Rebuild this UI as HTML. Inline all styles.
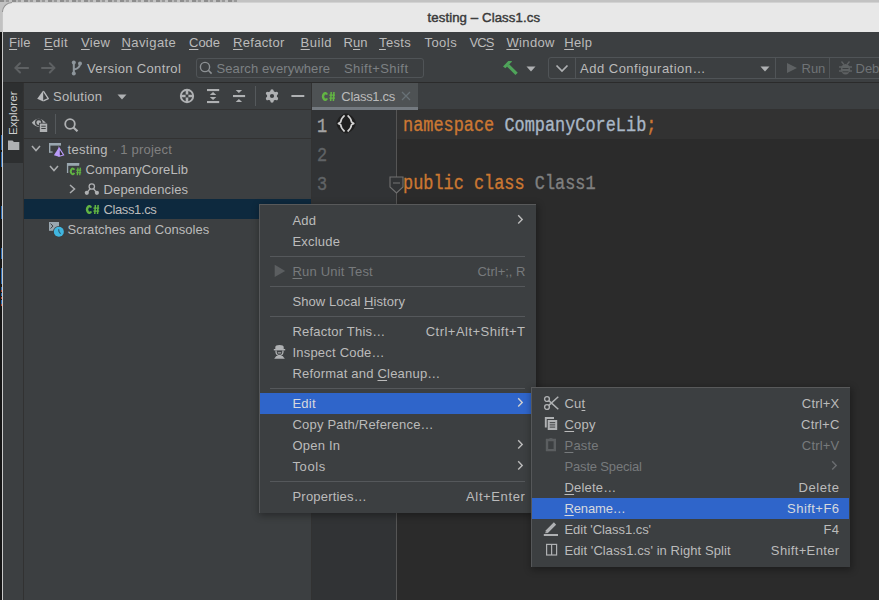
<!DOCTYPE html>
<html><head><meta charset="utf-8">
<style>
*{margin:0;padding:0;box-sizing:border-box}
html,body{width:879px;height:600px;overflow:hidden;background:#2b2b2b}
body{position:relative;font-family:"Liberation Sans",sans-serif;font-size:13px;color:#bbbbbb}
.a{position:absolute}
.t{position:absolute;white-space:pre;line-height:1}
.code{font-family:'Liberation Mono',monospace;font-size:16.9px;transform:scaleY(1.17);transform-origin:0 0;-webkit-text-stroke:0.3px currentColor}
u{text-decoration:underline;text-decoration-thickness:1px;text-underline-offset:2px}
</style></head><body>
<!-- desktop strip -->
<div class="a" style="left:0;top:0;width:879px;height:32px;background:#c2c2c2"></div>
<div class="a" style="left:0;top:0;width:240px;height:1.5px;background:repeating-linear-gradient(90deg,#8d8d8d 0 4px,#b8b8b8 4px 6px,#999 6px 9px,#c2c2c2 9px 12px)"></div>
<div class="a" style="left:0;top:32px;width:2px;height:568px;background:#151515"></div>
<div class="a" style="left:1px;top:135px;width:1px;height:15px;background:#2a6cb5"></div><div class="a" style="left:1px;top:152px;width:1px;height:15px;background:#2a6cb5"></div><div class="a" style="left:1px;top:206px;width:1px;height:13px;background:#2a6cb5"></div><div class="a" style="left:1px;top:248px;width:1px;height:11px;background:#2a6cb5"></div><div class="a" style="left:1px;top:268px;width:1px;height:16px;background:#2a6cb5"></div><div class="a" style="left:1px;top:287px;width:1px;height:3px;background:#2a6cb5"></div><div class="a" style="left:1px;top:290px;width:1px;height:2px;background:#b04a3a"></div><div class="a" style="left:1px;top:293px;width:1px;height:3px;background:#2a6cb5"></div><div class="a" style="left:1px;top:297px;width:1px;height:2px;background:#b04a3a"></div><div class="a" style="left:1px;top:300px;width:1px;height:4px;background:#2a6cb5"></div><div class="a" style="left:1px;top:304px;width:1px;height:2px;background:#b04a3a"></div>
<div class="a" style="left:2px;top:10px;width:1px;height:590px;background:#c8c8c8"></div>
<!-- title bar -->
<div class="a" style="left:3px;top:2px;width:880px;height:30px;background:#e8e8e8;border-top-left-radius:9px;border-top:1px solid #d2d2d2"></div>
<div class="a" style="left:2px;top:2px;width:10px;height:10px;border-top-left-radius:10px;border-left:1px solid #6a6a6a;border-top:1px solid #6a6a6a;opacity:0.6"></div>
<div class="t" style="left:427.5px;top:10.5px;font-size:13.2px;color:#3a3a3a;-webkit-text-stroke:0.45px #3a3a3a;letter-spacing:0.1px">testing – Class1.cs</div>

<!-- menubar + toolbar bg -->
<div class="a" style="left:3px;top:32px;width:876px;height:50px;background:#3c3f41"></div>
<div class="a" style="left:3px;top:82px;width:876px;height:1px;background:#2b2b2b"></div>

<!-- main lower area -->
<div class="a" style="left:3px;top:83px;width:20px;height:517px;background:#3c3f41"></div>
<div class="a" style="left:3px;top:83px;width:20px;height:80px;background:#2d2f30"></div>
<div class="a" style="left:23px;top:83px;width:1px;height:517px;background:#323232"></div>
<div class="a" style="left:24px;top:83px;width:287px;height:517px;background:#3c3f41"></div>
<div class="a" style="left:24px;top:109px;width:287px;height:1px;background:#323232"></div>
<div class="a" style="left:24px;top:138px;width:287px;height:1px;background:#323232"></div>
<div class="a" style="left:24px;top:199px;width:287px;height:20px;background:#0d293e"></div>
<div class="a" style="left:311px;top:83px;width:1px;height:517px;background:#323232"></div>

<!-- editor -->
<div class="a" style="left:312px;top:83px;width:567px;height:26px;background:#3c3f41"></div>
<div class="a" style="left:312px;top:109px;width:567px;height:1px;background:#323232"></div>
<div class="a" style="left:312px;top:83px;width:106px;height:27px;background:#4e5254"></div>
<div class="a" style="left:312px;top:107px;width:106px;height:3px;background:#747a80"></div>
<div class="a" style="left:312px;top:110px;width:85px;height:490px;background:#313335"></div>
<div class="a" style="left:396px;top:110px;width:1px;height:490px;background:#555555"></div>
<div class="a" style="left:397px;top:110px;width:482px;height:29px;background:#323232"></div>

<!-- menubar -->
<div class="t" style="left:9px;top:35.5px;letter-spacing:0.17px"><u>F</u>ile</div>
<div class="t" style="left:43.9px;top:35.5px;letter-spacing:0.47px"><u>E</u>dit</div>
<div class="t" style="left:81px;top:35.5px;letter-spacing:0.27px"><u>V</u>iew</div>
<div class="t" style="left:121.4px;top:35.5px;letter-spacing:0.45px"><u>N</u>avigate</div>
<div class="t" style="left:189px;top:35.5px;letter-spacing:0px"><u>C</u>ode</div>
<div class="t" style="left:233px;top:35.5px;letter-spacing:0.32px"><u>R</u>efactor</div>
<div class="t" style="left:300.6px;top:35.5px;letter-spacing:0.52px"><u>B</u>uild</div>
<div class="t" style="left:343.6px;top:35.5px;letter-spacing:0px">R<u>u</u>n</div>
<div class="t" style="left:379px;top:35.5px;letter-spacing:0.36px"><u>T</u>ests</div>
<div class="t" style="left:424.5px;top:35.5px;letter-spacing:0.44px">Too<u>l</u>s</div>
<div class="t" style="left:469.6px;top:35.5px;letter-spacing:-1.0px">VC<u>S</u></div>
<div class="t" style="left:506.4px;top:35.5px;letter-spacing:0.37px"><u>W</u>indow</div>
<div class="t" style="left:564.2px;top:35.5px;letter-spacing:0.35px"><u>H</u>elp</div>
<!-- toolbar -->
<svg class="a" style="left:0;top:0" width="879" height="600" viewBox="0 0 879 600"><path d="M15.3 67.9H28.1M15.3 67.9L20 63.3M15.3 67.9L20 72.5M54.5 67.9H42M54.5 67.9L49.8 63.3M54.5 67.9L49.8 72.5" stroke="#5e6163" stroke-width="2" fill="none" stroke-linecap="round"/></svg>
<svg class="a" style="left:0;top:0" width="879" height="600" viewBox="0 0 879 600"><g fill="#8e969c"><circle cx="73.8" cy="62.4" r="2"/><circle cx="80" cy="63.4" r="2"/><circle cx="73.8" cy="73.4" r="2"/><path d="M73.8 62.4V73.4M80 63.4Q80.2 68.2 73.8 69.6" fill="none" stroke="#8e969c" stroke-width="2"/></g></svg>
<div class="t" style="left:87px;top:62px;letter-spacing:0.35px">Version Control</div>
<div class="a" style="left:196px;top:58px;width:228px;height:20px;border:1px solid #505457;border-radius:3px"></div>
<svg class="a" style="left:199px;top:61px" width="14" height="14" viewBox="0 0 14 14"><circle cx="6" cy="6" r="4.6" stroke="#8d9194" stroke-width="1.4" fill="none"/><path d="M9.3 9.3L12.6 12.6" stroke="#8d9194" stroke-width="1.6"/></svg>
<div class="t" style="left:216.5px;top:62px;color:#7d8184;letter-spacing:0.1px">Search everywhere</div>
<div class="t" style="left:344px;top:62px;color:#7d8184;letter-spacing:0.44px">Shift+Shift</div>
<svg class="a" style="left:498px;top:56px" width="24" height="24" viewBox="0 0 24 24"><path d="M5 10.6L10.3 5H14L13.6 6L7.4 12.2Z" fill="#4fa45a"/><path d="M10 9.3L18.6 17.8" stroke="#4fa45a" stroke-width="3.3"/></svg>
<svg class="a" style="left:526px;top:66px" width="10" height="6" viewBox="0 0 10 6"><path d="M0.5 0.5H9.5L5 5.5Z" fill="#afb1b3"/></svg>
<div class="a" style="left:548px;top:57px;width:340px;height:22px;border:1px solid #505457;border-radius:3px"></div>
<div class="a" style="left:575px;top:58px;width:1px;height:20px;background:#505457"></div>
<svg class="a" style="left:555px;top:63px" width="14" height="10" viewBox="0 0 14 10"><path d="M1.5 2.5L7 8L12.5 2.5" stroke="#afb1b3" stroke-width="1.7" fill="none"/></svg>
<div class="t" style="left:580px;top:62px;letter-spacing:0.5px">Add Configuration…</div>
<svg class="a" style="left:760px;top:66px" width="10" height="6" viewBox="0 0 10 6"><path d="M0.5 0.5H9.5L5 5.5Z" fill="#afb1b3"/></svg>
<div class="a" style="left:775px;top:58px;width:1px;height:20px;background:#505457"></div>
<svg class="a" style="left:786px;top:62px" width="12" height="12" viewBox="0 0 12 12"><path d="M1 1L11 6L1 11Z" fill="#5e6163"/></svg>
<div class="t" style="left:801.5px;top:62px;color:#6f7376">Run</div>
<div class="a" style="left:829px;top:58px;width:1px;height:20px;background:#505457"></div>
<svg class="a" style="left:0;top:0" width="879" height="600" viewBox="0 0 879 600"><g fill="#5e6163" stroke="#5e6163"><path d="M841.5 61.5L844 64.5M849.5 61.5L847 64.5" stroke-width="1.3" fill="none"/><ellipse cx="845.5" cy="69.3" rx="4.6" ry="5.2" stroke="none"/><path d="M839 67H852M839 71H852" stroke-width="1.3"/><path d="M842.5 68.5H848.5M842.5 71.8H848.5" stroke="#3c3f41" stroke-width="1"/></g></svg>
<div class="t" style="left:855.5px;top:62px;color:#6f7376">Debug</div>
<!-- tool window header -->
<div class="t" style="left:8px;top:134.5px;font-size:11.5px;transform:rotate(-90deg);transform-origin:0 0;letter-spacing:0.1px;color:#cfcfcf">Explorer</div>
<svg class="a" style="left:7px;top:140px" width="13" height="11" viewBox="0 0 13 11"><path d="M1 0.5H5.5L7 2H12.3V10H1Z" fill="#afb1b3"/></svg>
<svg class="a" style="left:0;top:0" width="879" height="600" viewBox="0 0 879 600"><path d="M43.2 90.5L37.2 98.7L43.2 101.6Z" fill="#b8babc"/><path d="M43.4 91.2L48.3 98.6L43.4 100.9" stroke="#b8babc" stroke-width="1.3" fill="none" stroke-linejoin="round"/></svg>
<div class="t" style="left:53px;top:90px;letter-spacing:0.3px">Solution</div>
<svg class="a" style="left:117px;top:94px" width="10" height="6" viewBox="0 0 10 6"><path d="M0.5 0.5H9.5L5 5.5Z" fill="#afb1b3"/></svg>
<svg class="a" style="left:0;top:0" width="879" height="600" viewBox="0 0 879 600"><g fill="#afb1b3" stroke="none">
<circle cx="187" cy="96" r="6.2" stroke="#afb1b3" stroke-width="1.9" fill="none"/>
<path d="M187 89.5V94.6M187 97.4V102.5M180.5 96H185.6M188.4 96H193.5" stroke="#afb1b3" stroke-width="2.6"/>
<rect x="207" y="89" width="12.2" height="2.1"/><rect x="207" y="101" width="12.2" height="2.1"/>
<path d="M209.8 95H216.3L213.05 91.9Z M209.8 97H216.3L213.05 100.1Z"/>
<path d="M235.7 90H242.1L238.9 93.1Z M235.7 102H242.1L238.9 98.9Z"/><rect x="233" y="95" width="12.1" height="2.1"/>
<rect x="255" y="86" width="1" height="20" fill="#55595c"/>
<circle cx="272" cy="96" r="5"/>
<path d="M272.00 90.90L272.00 101.10M267.58 93.45L276.42 98.55M276.42 93.45L267.58 98.55" stroke="#afb1b3" stroke-width="3.4" stroke-linecap="round"/>
<circle cx="272" cy="96" r="2.1" fill="#3c3f41"/>
<rect x="291.4" y="95" width="12.9" height="2"/>
</g></svg>
<!-- tree toolbar -->
<svg class="a" style="left:0;top:0" width="879" height="600" viewBox="0 0 879 600"><path d="M31.8 122.8Q38.5 114.5 45.8 122.8Q38.5 131 31.8 122.8Z" fill="#afb1b3"/><circle cx="38.8" cy="122.6" r="3.1" stroke="#3c3f41" stroke-width="1.4" fill="#afb1b3"/><rect x="39" y="122.8" width="9" height="10" fill="#3c3f41"/><rect x="39.8" y="123.6" width="7.4" height="8.4" fill="#afb1b3"/><path d="M41.3 126.2H45.7M41.3 128.5H45.7" stroke="#3c3f41" stroke-width="1"/></svg>
<div class="a" style="left:55px;top:114px;width:1px;height:20px;background:#55595c"></div>
<svg class="a" style="left:64px;top:118px" width="16" height="14" viewBox="0 0 16 14"><circle cx="6" cy="6" r="4.8" stroke="#afb1b3" stroke-width="1.8" fill="none"/><path d="M9.5 9.5L13.5 13.3" stroke="#afb1b3" stroke-width="2.2"/></svg>
<!-- tree -->
<svg class="a" style="left:31px;top:145px" width="10" height="7" viewBox="0 0 10 7"><path d="M1 1L5 5.5L9 1" stroke="#aaacae" stroke-width="1.55" fill="none"/></svg>
<div class="t" style="left:67.5px;top:143px;letter-spacing:0.3px">testing</div>
<div class="t" style="left:112px;top:143px;color:#808080;letter-spacing:0.2px">· 1 project</div>
<svg class="a" style="left:49px;top:165px" width="10" height="7" viewBox="0 0 10 7"><path d="M1 1L5 5.5L9 1" stroke="#aaacae" stroke-width="1.55" fill="none"/></svg>
<div class="t" style="left:85.5px;top:163px;letter-spacing:0.1px">CompanyCoreLib</div>
<svg class="a" style="left:68.6px;top:184px" width="7" height="10" viewBox="0 0 7 10"><path d="M1 1L5.5 5L1 9" stroke="#aaacae" stroke-width="1.55" fill="none"/></svg>
<div class="t" style="left:103.5px;top:183px;letter-spacing:0.13px">Dependencies</div>
<div class="t" style="left:103.5px;top:203px;letter-spacing:-0.38px">Class1.cs</div>
<div class="t" style="left:67.5px;top:223px;letter-spacing:0.04px">Scratches and Consoles</div>
<svg class="a" style="left:0;top:0" width="879" height="600" viewBox="0 0 879 600">
<path d="M49.7 152.5V143.8H61" stroke="#9aa7b0" stroke-width="1.4" fill="none"/><rect x="49" y="143" width="12" height="2.6" fill="#9aa7b0"/><rect x="49" y="151.4" width="3.6" height="1.3" fill="#9aa7b0"/>
<path d="M59 147.2L53.9 155.2L59 156.7Z" fill="#b99bf8"/><path d="M59.2 148L63.6 155L59.2 156.3Z" stroke="#b99bf8" stroke-width="1.2" fill="#2e2f30"/>
<path d="M67.6 173V163.8H79.2" stroke="#9aa7b0" stroke-width="1.4" fill="none"/><rect x="67" y="163" width="12.2" height="2.8" fill="#9aa7b0"/>
<rect x="68.8" y="166.6" width="13.5" height="9.5" fill="#3c3f41"/>
<path d="M74.25 169.83A1.84 2.81 0 1 0 74.25 172.97" stroke="#62b543" stroke-width="1.98" fill="none"/><path d="M77.98 167.60L77.38 175.20M80.36 167.60L79.76 175.20" stroke="#62b543" stroke-width="1.29"/><path d="M76.23 170.18H81.20M76.23 172.77H81.20" stroke="#62b543" stroke-width="1.14"/>
<circle cx="91.8" cy="186.5" r="2.7" stroke="#afb1b3" stroke-width="1.3" fill="none"/><path d="M90.2 188.6L87 192.5M93.4 188.6L96.6 192.5" stroke="#afb1b3" stroke-width="1.3"/><circle cx="86.8" cy="192.8" r="2.1" fill="#afb1b3"/><circle cx="96.9" cy="192.8" r="2.1" fill="#afb1b3"/>
<path d="M91.07 207.64A2.13 3.33 0 1 0 91.07 211.36" stroke="#62b543" stroke-width="2.34" fill="none"/><path d="M95.38 205.00L94.78 214.00M98.15 205.00L97.55 214.00" stroke="#62b543" stroke-width="1.53"/><path d="M93.39 208.06H99.20M93.39 211.12H99.20" stroke="#62b543" stroke-width="1.35"/>
<rect x="49" y="222" width="10" height="8.8" fill="#9aa7b0"/><path d="M50.6 223.6L52.9 226.1L50.6 228.6" stroke="#3c3f41" stroke-width="1" fill="none"/>
<circle cx="58.85" cy="231.75" r="5.8" fill="#3c3f41"/><circle cx="58.85" cy="231.75" r="5" fill="#40b6e0"/><path d="M58.6 229.2Q58.6 232.5 60.6 233.8" stroke="#2b5a70" stroke-width="1.2" fill="none"/>
<path d="M326.97 94.64A2.08 3.33 0 1 0 326.97 98.36" stroke="#62b543" stroke-width="2.34" fill="none"/><path d="M331.24 92.00L330.64 101.00M333.97 92.00L333.37 101.00" stroke="#62b543" stroke-width="1.53"/><path d="M329.28 95.06H335.00M329.28 98.12H335.00" stroke="#62b543" stroke-width="1.35"/>
</svg>
<!-- editor tab -->
<div class="t" style="left:341.3px;top:90px;letter-spacing:-0.29px">Class1.cs</div>
<svg class="a" style="left:401px;top:91px" width="10" height="10" viewBox="0 0 10 10"><path d="M1 1L9 9M9 1L1 9" stroke="#687176" stroke-width="1.3"/></svg>
<!-- gutter -->
<div class="t code" style="left:317px;top:117.5px;color:#a4a3a3">1</div>
<div class="t code" style="left:317px;top:146.5px;color:#606366">2</div>
<div class="t code" style="left:317px;top:175.5px;color:#606366">3</div>
<svg class="a" style="left:0;top:0" width="879" height="600" viewBox="0 0 879 600"><path d="M344.8 114.2Q337.5 118 337.2 123.4Q337.5 128.8 344.8 132.6H347.4Q354.7 128.8 355 123.4Q354.7 118 347.4 114.2Z" fill="#1f1f1f" stroke="#1f1f1f" stroke-width="1.5"/><path d="M344.6 115.3Q341 118.3 340.7 122L338.4 123.4L340.7 124.8Q341 128.5 344.6 131.5M347.6 115.3Q351.2 118.3 351.5 122L353.8 123.4L351.5 124.8Q351.2 128.5 347.6 131.5" stroke="#d2d2d2" stroke-width="1.7" fill="none" stroke-linejoin="round"/></svg>
<svg class="a" style="left:389px;top:176px" width="15" height="18" viewBox="0 0 15 18"><path d="M1 1H14V11L7.5 17L1 11Z" fill="#313335" stroke="#707070" stroke-width="1.1"/><path d="M4 7H11" stroke="#707070" stroke-width="1.1"/></svg>
<!-- code -->
<div class="t code" style="left:403px;top:117px;color:#cc7832">namespace <span style="color:#a9b7c6">CompanyCoreLib</span>;</div>
<div class="t code" style="left:403px;top:175px;color:#cc7832">public class <span style="color:#808080">Class1</span></div>
<!-- context menu -->
<div class="a" style="left:259px;top:204px;width:277px;height:309px;background:#3c3f41;border-top:1px solid #58595a;border-left:1px solid #555759;box-shadow:1px 2px 7px 1px rgba(0,0,0,0.32)"></div>
<div class="t" style="left:292.5px;top:214px;color:#bbbbbb;letter-spacing:0.2px">Add</div>
<svg class="a" style="left:517px;top:214px" width="7" height="11" viewBox="0 0 7 11"><path d="M1.2 1.3L5.2 5.4L1.2 9.5" stroke="#bbbbbb" stroke-width="1.4" fill="none"/></svg>
<div class="t" style="left:292.5px;top:235px;color:#bbbbbb;letter-spacing:0.2px">Exclude</div>
<div class="a" style="left:270px;top:256px;width:255px;height:1px;background:#55585b;"></div>
<div class="t" style="left:292.5px;top:265px;color:#777a7c;letter-spacing:0.2px"><u>R</u>un Unit Test</div>
<div class="t" style="right:353.5px;top:265px;color:#777a7c;letter-spacing:0px">Ctrl+;, R</div>
<div class="a" style="left:270px;top:286px;width:255px;height:1px;background:#55585b;"></div>
<div class="t" style="left:292.5px;top:295px;color:#bbbbbb;letter-spacing:0.07px">Show Local <u>H</u>istory</div>
<div class="a" style="left:270px;top:316px;width:255px;height:1px;background:#55585b;"></div>
<div class="t" style="left:292.5px;top:325px;color:#bbbbbb;letter-spacing:0.2px">Refactor This…</div>
<div class="t" style="right:353.5px;top:325px;color:#bbbbbb;letter-spacing:0.48px">Ctrl+Alt+Shift+T</div>
<div class="t" style="left:292.5px;top:346px;color:#bbbbbb;letter-spacing:0.2px">Inspect Code…</div>
<div class="t" style="left:292.5px;top:367px;color:#bbbbbb;letter-spacing:0.2px">Reformat and <u>C</u>leanup…</div>
<div class="a" style="left:270px;top:388px;width:255px;height:1px;background:#55585b;"></div>
<div class="a" style="left:260px;top:393px;width:276px;height:21px;background:#2f65ca;"></div>
<div class="t" style="left:292.5px;top:397px;color:#d6d9de;letter-spacing:0.2px">Edit</div>
<svg class="a" style="left:517px;top:397px" width="7" height="11" viewBox="0 0 7 11"><path d="M1.2 1.3L5.2 5.4L1.2 9.5" stroke="#d0d0d0" stroke-width="1.4" fill="none"/></svg>
<div class="t" style="left:292.5px;top:418px;color:#bbbbbb;letter-spacing:0.2px">Copy Path/Reference…</div>
<div class="t" style="left:292.5px;top:439px;color:#bbbbbb;letter-spacing:0.2px">Open In</div>
<svg class="a" style="left:517px;top:439px" width="7" height="11" viewBox="0 0 7 11"><path d="M1.2 1.3L5.2 5.4L1.2 9.5" stroke="#bbbbbb" stroke-width="1.4" fill="none"/></svg>
<div class="t" style="left:292.5px;top:460px;color:#bbbbbb;letter-spacing:0.6px">Tools</div>
<svg class="a" style="left:517px;top:460px" width="7" height="11" viewBox="0 0 7 11"><path d="M1.2 1.3L5.2 5.4L1.2 9.5" stroke="#bbbbbb" stroke-width="1.4" fill="none"/></svg>
<div class="a" style="left:270px;top:481px;width:255px;height:1px;background:#55585b;"></div>
<div class="t" style="left:292.5px;top:490px;color:#bbbbbb;letter-spacing:0.2px">Properties…</div>
<div class="t" style="right:353.5px;top:490px;color:#bbbbbb;letter-spacing:0.62px">Alt+Enter</div>
<!-- submenu -->
<div class="a" style="left:531px;top:387px;width:319px;height:180px;background:#3c3f41;border-top:1px solid #58595a;border-left:1px solid #555759;box-shadow:1px 2px 7px 1px rgba(0,0,0,0.32)"></div>
<div class="t" style="left:564.5px;top:397px;color:#bbbbbb;letter-spacing:0.2px">Cu<u>t</u></div>
<div class="t" style="right:39.5px;top:397px;color:#bbbbbb;letter-spacing:0.2px">Ctrl+X</div>
<div class="t" style="left:564.5px;top:418px;color:#bbbbbb;letter-spacing:0.2px"><u>C</u>opy</div>
<div class="t" style="right:39.5px;top:418px;color:#bbbbbb;letter-spacing:0.2px">Ctrl+C</div>
<div class="t" style="left:564.5px;top:439px;color:#777a7c;letter-spacing:0.2px"><u>P</u>aste</div>
<div class="t" style="right:39.5px;top:439px;color:#777a7c;letter-spacing:0.2px">Ctrl+V</div>
<div class="t" style="left:564.5px;top:460px;color:#777a7c;letter-spacing:-0.17px">Paste Special</div>
<svg class="a" style="left:831px;top:460px" width="7" height="11" viewBox="0 0 7 11"><path d="M1.2 1.3L5.2 5.4L1.2 9.5" stroke="#6a6d70" stroke-width="1.4" fill="none"/></svg>
<div class="t" style="left:564.5px;top:481px;color:#bbbbbb;letter-spacing:0.2px"><u>D</u>elete…</div>
<div class="t" style="right:39.5px;top:481px;color:#bbbbbb;letter-spacing:0.55px">Delete</div>
<div class="a" style="left:532px;top:498px;width:317px;height:21px;background:#2f65ca;"></div>
<div class="t" style="left:564.5px;top:502px;color:#d6d9de;letter-spacing:-0.13px"><u>R</u>ename…</div>
<div class="t" style="right:39.5px;top:502px;color:#d6d9de;letter-spacing:0.45px">Shift+F6</div>
<div class="t" style="left:564.5px;top:523px;color:#bbbbbb;letter-spacing:-0.05px">Edit 'Class1.cs'</div>
<div class="t" style="right:39.5px;top:523px;color:#bbbbbb;letter-spacing:0.4px">F4</div>
<div class="t" style="left:564.5px;top:544px;color:#bbbbbb;letter-spacing:0.07px">Edit 'Class1.cs' in Right Split</div>
<div class="t" style="right:39.5px;top:544px;color:#bbbbbb;letter-spacing:0.36px">Shift+Enter</div>
<!-- menu icons -->
<svg class="a" style="left:274px;top:264px" width="12" height="14" viewBox="0 0 12 14"><path d="M0.7 0.8L11.2 7L0.7 13Z" fill="#5b5e60"/></svg>
<svg class="a" style="left:273px;top:344px" width="13" height="16" viewBox="0 0 13 16"><path d="M2.3 5V3Q2.3 1 6.5 1Q10.7 1 10.7 3V5Z" fill="#afb1b3"/><rect x="0.8" y="5" width="11.4" height="1.4" fill="#afb1b3"/><path d="M3 6.5Q2.8 11.5 6.5 11.5Q10.2 11.5 10 6.5" stroke="#afb1b3" stroke-width="1.3" fill="none"/><rect x="4.8" y="8.3" width="3.4" height="1.1" fill="#afb1b3"/><path d="M1.2 14.8L3.3 12H9.7L11.8 14.8Z" fill="#afb1b3"/></svg>
<svg class="a" style="left:543px;top:395px" width="17" height="16" viewBox="0 0 17 16"><circle cx="4" cy="4" r="2.4" stroke="#afb1b3" stroke-width="1.4" fill="none"/><circle cx="4" cy="12" r="2.4" stroke="#afb1b3" stroke-width="1.4" fill="none"/><path d="M5.8 5.6L15.3 14.3M5.8 10.4L15.3 1.8" stroke="#afb1b3" stroke-width="1.5"/></svg>
<svg class="a" style="left:544px;top:416px" width="14" height="15" viewBox="0 0 14 15"><path d="M1.8 11.5V2H10" stroke="#afb1b3" stroke-width="1.9" fill="none"/><rect x="3.7" y="4" width="9.5" height="10" fill="#afb1b3"/><path d="M5.7 6.7H11.2M5.7 8.9H11.2M5.7 11.1H11.2" stroke="#3c3f41" stroke-width="1"/></svg>
<svg class="a" style="left:545px;top:437px" width="12" height="15" viewBox="0 0 12 15"><path d="M2 3H9.8V13.1H2Z" stroke="#5b5e60" stroke-width="2.4" fill="none"/><path d="M3.8 2.6Q3.8 0.9 5.9 0.9Q8 0.9 8 2.6Z" fill="#5b5e60"/></svg>
<svg class="a" style="left:543px;top:521px" width="16" height="16" viewBox="0 0 16 16"><path d="M3.5 11L12 2.5" stroke="#afb1b3" stroke-width="3.2"/><path d="M2.2 12.3L2.8 10.2L4.6 12Z" fill="#afb1b3"/><rect x="0.8" y="13" width="14.2" height="2" fill="#afb1b3"/></svg>
<svg class="a" style="left:545px;top:543px" width="13" height="13" viewBox="0 0 13 13"><rect x="1.6" y="1.4" width="10" height="10.6" stroke="#afb1b3" stroke-width="1.2" fill="none"/><path d="M6.6 1.4V12" stroke="#afb1b3" stroke-width="1.2"/></svg>
</body></html>
